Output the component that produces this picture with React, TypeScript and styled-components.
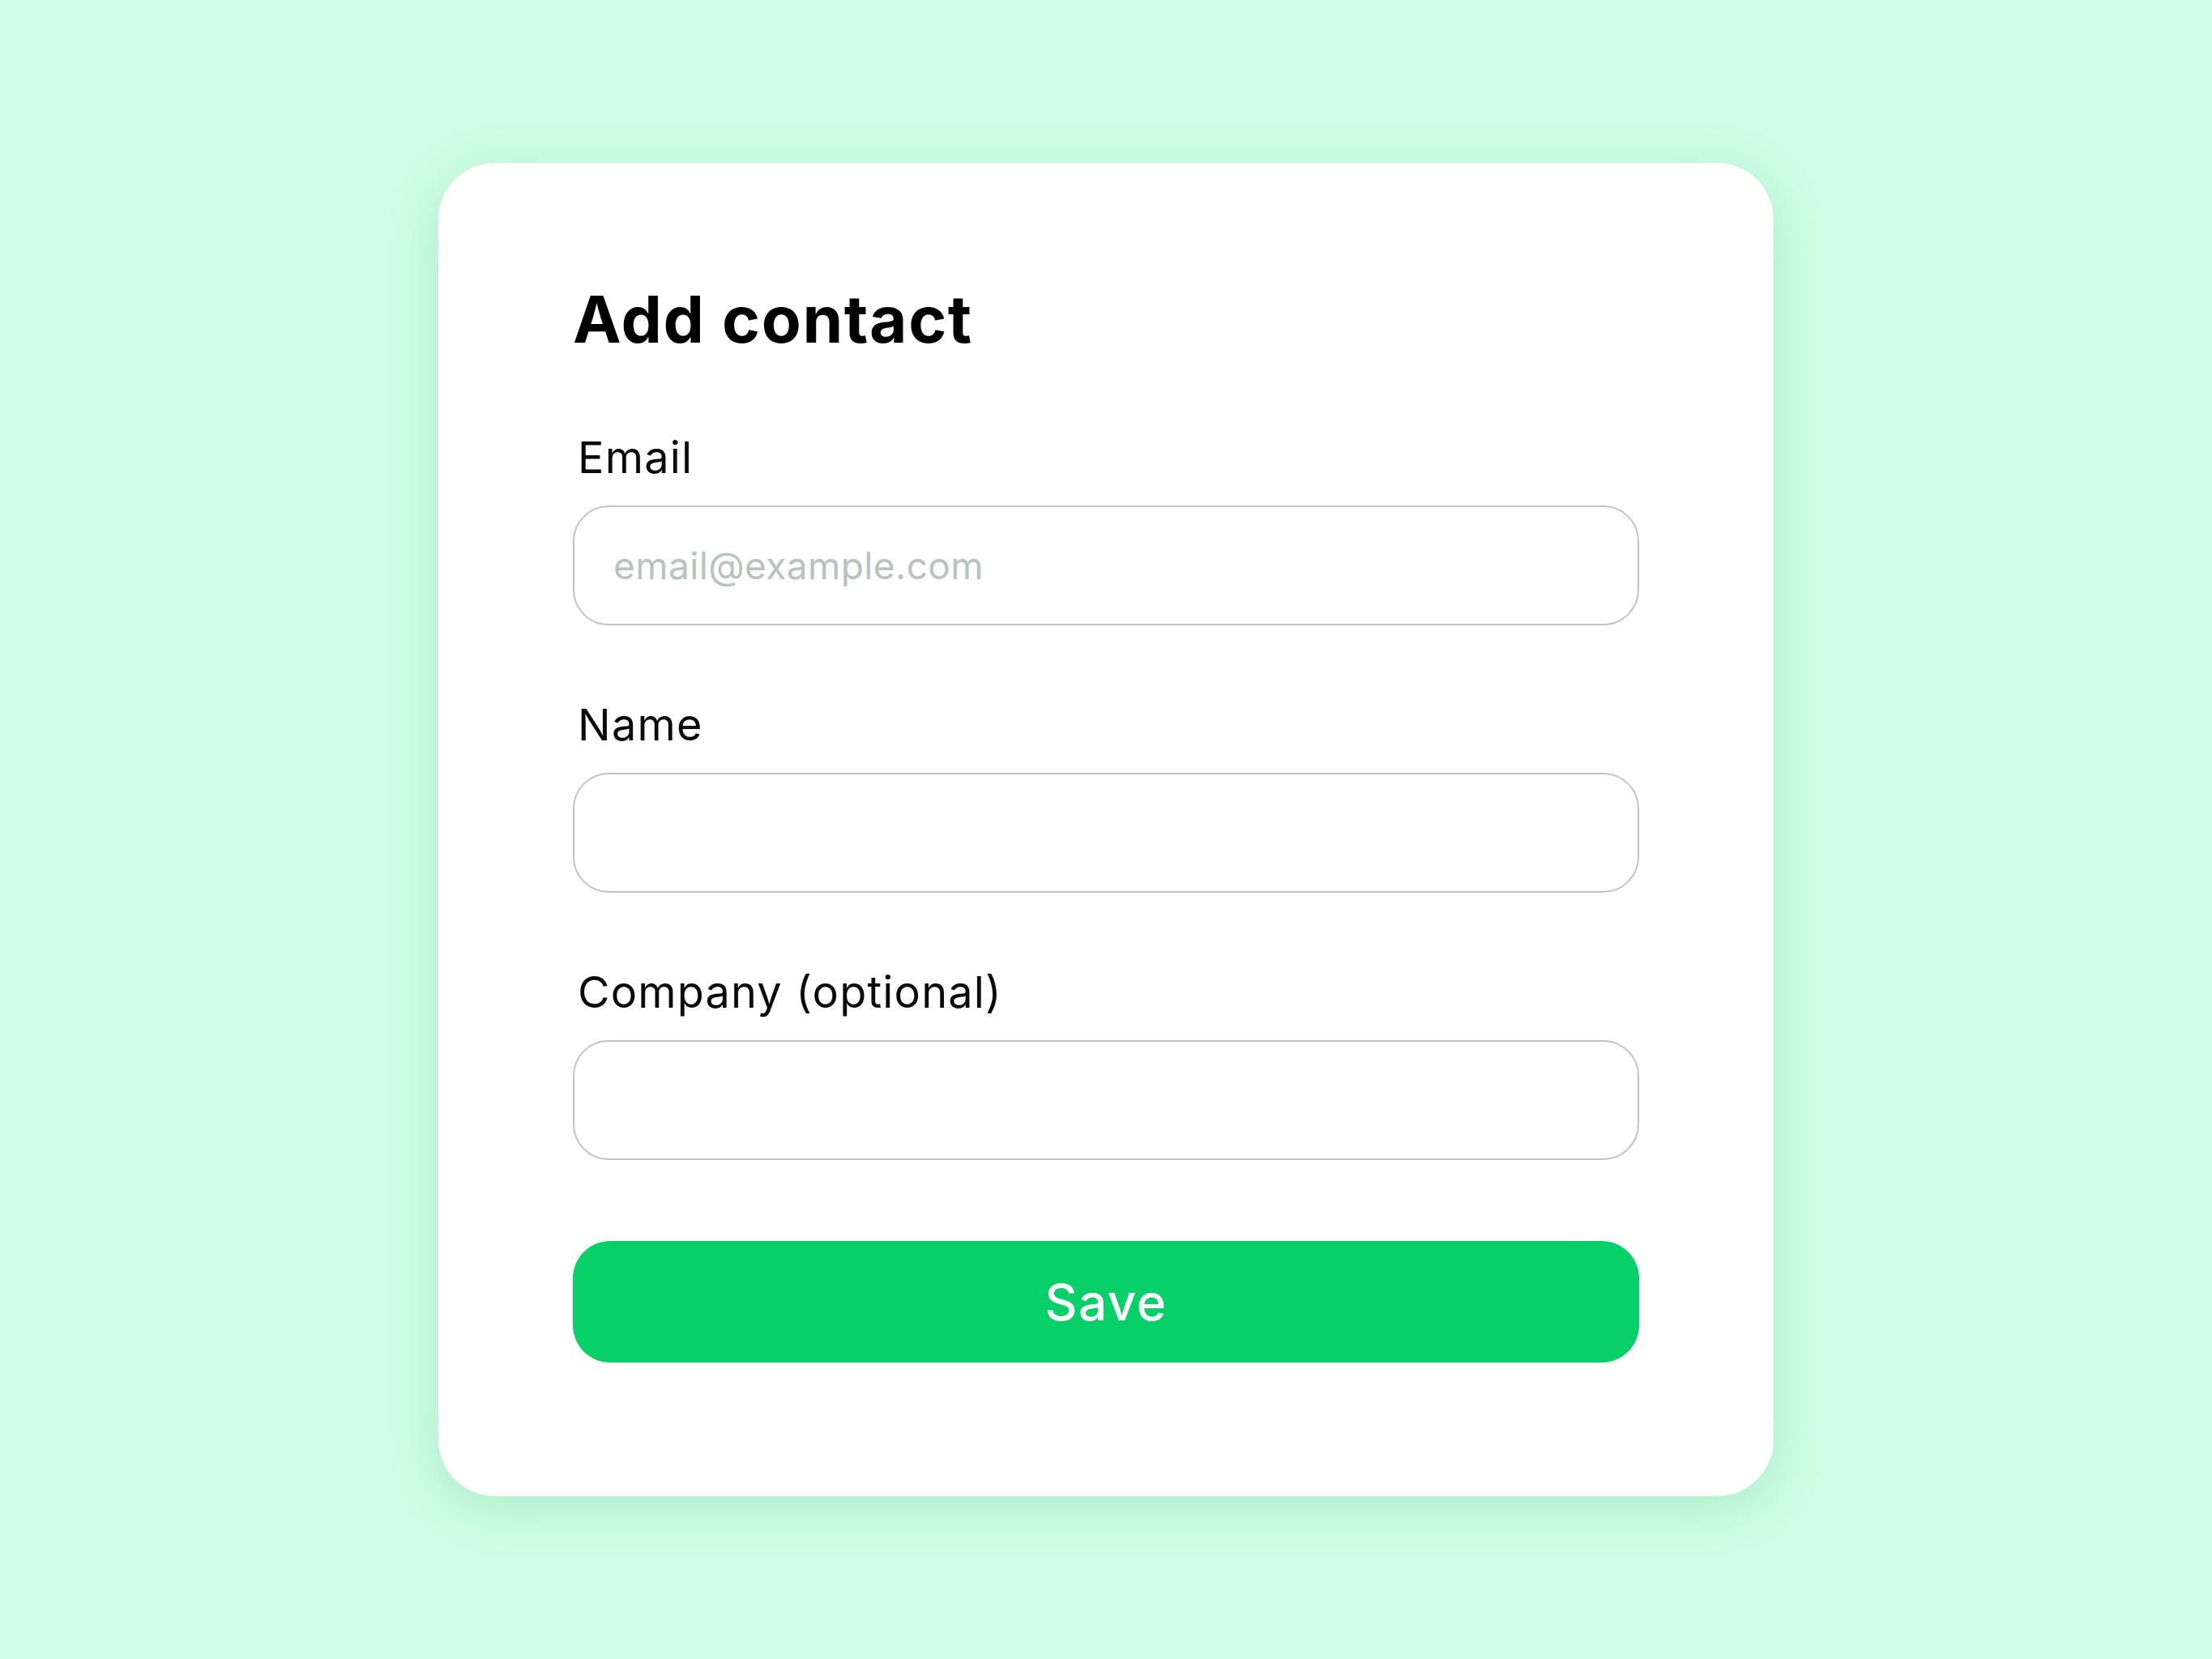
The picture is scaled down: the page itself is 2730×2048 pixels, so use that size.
import styled, { createGlobalStyle } from "styled-components";

const GlobalStyle = createGlobalStyle`
  html, body {
    margin: 0;
    padding: 0;
  }
  body {
    background: #d0fde5;
    font-family: Inter, "Noto Sans", "Liberation Sans", sans-serif;
    color: #0a0a0a;
  }
  * {
    box-sizing: border-box;
  }
`;

const Page = styled.main`
  min-height: 100vh;
  display: flex;
  align-items: center;
  justify-content: center;
`;

const Card = styled.section`
  width: 1648px;
  background: #ffffff;
  border-radius: 70px;
  padding: 145px 166px 165px;
  box-shadow: 0 12px 60px rgba(70, 190, 125, 0.28);
`;

const Title = styled.h1`
  margin: 0 0 90px;
  padding-left: 0;
  font-size: 80px;
  line-height: 96px;
  font-weight: 700;
  letter-spacing: 1.6px;
  color: #000;
`;

const Form = styled.form`
  display: flex;
  flex-direction: column;
  gap: 90px;
`;

const Field = styled.label`
  display: flex;
  flex-direction: column;
  gap: 27px;
`;

const LabelText = styled.span`
  padding-left: 6px;
  font-size: 54px;
  line-height: 65px;
  font-weight: 400;
  letter-spacing: 1.2px;
  color: #0a0a0a;
`;

const Input = styled.input`
  height: 148px;
  width: 100%;
  border: 2px solid #c3c3c3;
  border-radius: 44px;
  padding: 0 48px;
  font-family: inherit;
  font-size: 46px;
  letter-spacing: 0.4px;
  color: #0a0a0a;
  background: #fff;
  outline: none;

  &::placeholder {
    color: #b8c3be;
  }
`;

const SaveButton = styled.button`
  margin-top: 10px;
  height: 150px;
  width: 100%;
  border: none;
  border-radius: 46px;
  background: #08d068;
  color: #ffffff;
  font-family: inherit;
  font-size: 62px;
  font-weight: 500;
  letter-spacing: 1.5px;
  cursor: pointer;
`;

export default function App() {
  return (
    <>
      <GlobalStyle />
      <Page>
        <Card>
          <Title>Add contact</Title>
          <Form onSubmit={(e) => e.preventDefault()}>
            <Field>
              <LabelText>Email</LabelText>
              <Input type="email" placeholder="email@example.com" />
            </Field>
            <Field>
              <LabelText>Name</LabelText>
              <Input type="text" />
            </Field>
            <Field>
              <LabelText>Company (optional)</LabelText>
              <Input type="text" />
            </Field>
            <SaveButton type="submit">Save</SaveButton>
          </Form>
        </Card>
      </Page>
    </>
  );
}
